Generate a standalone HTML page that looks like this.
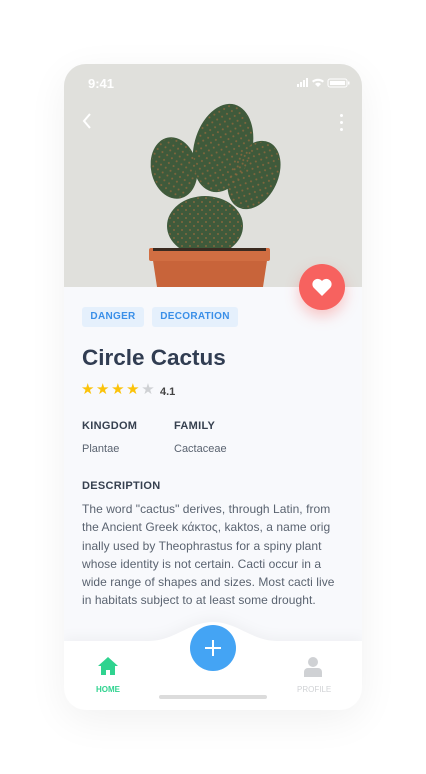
<!DOCTYPE html><html><head><style>
body{margin:0;width:426px;height:774px;background:#fff;font-family:"Liberation Sans",sans-serif;position:relative;overflow:hidden}
.ph{position:absolute;left:64px;top:64px;width:298px;height:646px;border-radius:22px;overflow:hidden;background:#f8f9fc;box-shadow:0 10px 40px rgba(0,0,0,.06)}
.img{position:absolute;left:0;top:0;width:298px;height:223px;background:#e0e0dc}
.a{position:absolute}
.tag{position:absolute;top:243px;height:20px;line-height:20px;background:#e5f0fc;color:#3a8fe8;font-size:10px;font-weight:bold;border-radius:3px;text-align:center;letter-spacing:.3px}
.lab{font-size:11px;font-weight:bold;color:#36404f;letter-spacing:.3px}
.val{font-size:11px;color:#5a6370}
</style></head><body>
<div class="ph">
<div class="img">
<svg width="298" height="223" style="position:absolute;left:0;top:0">
<defs><pattern id="d" width="8" height="8" patternUnits="userSpaceOnUse"><circle cx="2" cy="2" r="1" fill="#b0703f"/><circle cx="6" cy="6" r="1" fill="#b0703f"/></pattern></defs>
<g fill="#3f5a3b">
<ellipse cx="110" cy="104" rx="23" ry="31" transform="rotate(-12 110 104)"/>
<ellipse cx="190" cy="111" rx="24" ry="36" transform="rotate(25 190 111)"/>
<ellipse cx="159" cy="84" rx="29" ry="45" transform="rotate(15 159 84)"/>
<ellipse cx="141" cy="162" rx="38" ry="30"/>
</g>
<g fill="url(#d)" opacity=".6">
<ellipse cx="110" cy="104" rx="22" ry="30" transform="rotate(-12 110 104)"/>
<ellipse cx="190" cy="111" rx="23" ry="35" transform="rotate(25 190 111)"/>
<ellipse cx="159" cy="84" rx="28" ry="44" transform="rotate(15 159 84)"/>
<ellipse cx="141" cy="162" rx="37" ry="29"/>
</g>
<path d="M88 190h116l-5 33H93z" fill="#c8643a"/>
<rect x="85" y="184" width="121" height="13" rx="2" fill="#d16e42"/>
<rect x="89" y="184" width="113" height="3" fill="#3a2a20"/>
</svg>
<div class="a" style="left:24px;top:12px;color:#fff;font-size:13px;font-weight:bold">9:41</div>
<svg class="a" style="left:233px;top:14px" width="55" height="10"><g fill="#fff"><rect x="0" y="6" width="2" height="3"/><rect x="3" y="4" width="2" height="5"/><rect x="6" y="2" width="2" height="7"/><rect x="9" y="0" width="2" height="9"/><path d="M15 3a9 9 0 0 1 12 0l-1.5 1.5a7 7 0 0 0-9 0zM18 6a4 4 0 0 1 6 0l-3 3z"/><rect x="31" y="1" width="19" height="8" rx="2" fill="none" stroke="#fff"/><rect x="33" y="3" width="15" height="4"/><rect x="51" y="3.5" width="1.5" height="3"/></g></svg>
<svg class="a" style="left:17px;top:48px" width="12" height="18"><path d="M9 2L3 9l6 7" stroke="#fff" stroke-width="2" fill="none"/></svg>
<div class="a" style="left:276px;top:50px;width:3px"><div style="width:3px;height:3px;background:#fff;border-radius:50%;margin-bottom:4px"></div><div style="width:3px;height:3px;background:#fff;border-radius:50%;margin-bottom:4px"></div><div style="width:3px;height:3px;background:#fff;border-radius:50%"></div></div>
</div>
<div class="a" style="left:235px;top:200px;width:46px;height:46px;border-radius:50%;background:#f7625f;box-shadow:0 6px 14px rgba(247,98,95,.35)"><svg style="margin:13px 0 0 12px" width="22" height="20"><path d="M11 19L2.5 10.5a5 5 0 0 1 8.5-6.5 5 5 0 0 1 8.5 6.5z" fill="#fff"/></svg></div>
<div class="tag" style="left:18px;width:62px">DANGER</div>
<div class="tag" style="left:88px;width:86px">DECORATION</div>
<div class="a" style="left:18px;top:281px;font-size:22.5px;font-weight:bold;color:#313d52">Circle Cactus</div>
<div class="a" style="left:17px;top:316px;font-size:15px;letter-spacing:1.6px;color:#fbc30a">★★★★<span style="color:#cfd1d4">★</span></div>
<div class="a" style="left:96px;top:322px;font-size:11px;font-weight:bold;color:#444">4.1</div>
<div class="a lab" style="left:18px;top:356px">KINGDOM</div>
<div class="a lab" style="left:110px;top:356px">FAMILY</div>
<div class="a val" style="left:18px;top:379px">Plantae</div>
<div class="a val" style="left:110px;top:379px">Cactaceae</div>
<div class="a lab" style="left:18px;top:416px">DESCRIPTION</div>
<div class="a val" style="left:18px;top:436px;line-height:18.3px;font-size:12px;letter-spacing:.05px;white-space:nowrap">The word "cactus" derives, through Latin, from<br>the Ancient Greek κάκτος, kaktos, a name orig<br>inally used by Theophrastus for a spiny plant<br>whose identity is not certain. Cacti occur in a<br>wide range of shapes and sizes. Most cacti live<br>in habitats subject to at least some drought.</div>
<svg class="a" style="left:0;top:550px;filter:drop-shadow(0 -3px 6px rgba(0,0,0,.04))" width="298" height="96"><path d="M0 27H85C110 27 125 8 149 8S188 27 213 27H298V96H0z" fill="#fff"/></svg>
<div class="a" style="left:126px;top:561px;width:46px;height:46px;border-radius:50%;background:#44a4f4"><svg style="margin:13px" width="20" height="20"><path d="M10 2v16M2 10h16" stroke="#fff" stroke-width="2"/></svg></div>
<svg class="a" style="left:33px;top:592px" width="22" height="20"><path d="M11 1L1 10h3v9h5v-5h4v5h5v-9h3z" fill="#2fd38f"/></svg>
<div class="a" style="left:32px;top:621px;font-size:8px;color:#2fd38f;font-weight:bold">HOME</div>
<svg class="a" style="left:240px;top:592px" width="18" height="21"><circle cx="9" cy="6" r="5" fill="#cfd1d4"/><path d="M0 21v-5a4 4 0 0 1 4-4h10a4 4 0 0 1 4 4v5z" fill="#cfd1d4"/></svg>
<div class="a" style="left:233px;top:621px;font-size:8px;color:#d0d2d5">PROFILE</div>
<div class="a" style="left:95px;top:631px;width:108px;height:4px;border-radius:2px;background:#dcdcdc"></div>
</div>
</body></html>
